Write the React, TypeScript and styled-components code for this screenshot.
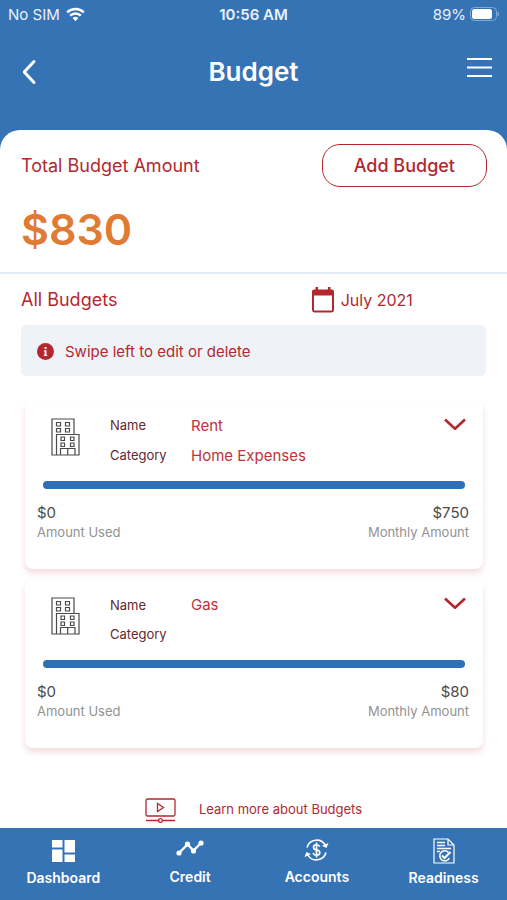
import React from "react";
import styled, { createGlobalStyle } from "styled-components";

const blue = "#3673b5";
const red = "#b3282f";

const GlobalStyle = createGlobalStyle`
  *, *::before, *::after { box-sizing: border-box; }
  body { margin: 0; background: ${blue}; font-family: "Inter", sans-serif; }
  h1, h2, p, dl, dd, ul { margin: 0; padding: 0; }
  button { font-family: inherit; cursor: pointer; }
  svg { display: block; flex: none; }
`;

const Page = styled.div`
  min-height: 100vh;
  display: flex;
  flex-direction: column;
`;

const StatusBar = styled.div`
  display: grid;
  grid-template-columns: 1fr auto 1fr;
  align-items: center;
  height: 28px;
  padding: 0 8px;
  color: #e9f1fa;
  font-size: 15px;
`;

const StatusGroup = styled.div<{ $end?: boolean }>`
  display: flex;
  align-items: center;
  gap: ${(p) => (p.$end ? 4 : 6)}px;
  justify-content: ${(p) => (p.$end ? "flex-end" : "flex-start")};
`;

const Clock = styled.time`
  font-weight: 600;
`;

const TitleBar = styled.header`
  display: grid;
  grid-template-columns: 1fr auto 1fr;
  align-items: center;
  height: 102px;
  padding: 0 15px 14px;
  color: #fff;
`;

const Title = styled.h1`
  font-size: 26px;
  line-height: 32px;
  font-weight: 600;
`;

const IconButton = styled.button<{ $end?: boolean }>`
  display: flex;
  padding: 0;
  border: 0;
  background: none;
  color: inherit;
  justify-self: ${(p) => (p.$end ? "end" : "start")};
`;

const Sheet = styled.main`
  flex: 1;
  display: flex;
  flex-direction: column;
  background: #fff;
  border-radius: 20px 20px 0 0;
`;

const Summary = styled.section`
  padding: 14px 20px 17px 21px;
  border-bottom: 2px solid #dfebf5;
`;

const SummaryTop = styled.div`
  display: flex;
  align-items: center;
  justify-content: space-between;
`;

const Heading = styled.h2`
  font-size: 18px;
  line-height: 24px;
  font-weight: 400;
  color: ${red};
`;

const AddButton = styled.button`
  height: 43px;
  padding: 0 31px;
  border: 1px solid ${red};
  border-radius: 18px;
  background: #fff;
  color: ${red};
  font-size: 18px;
  font-weight: 500;
`;

const Total = styled.p`
  margin-top: 16px;
  font-size: 43px;
  line-height: 52px;
  font-weight: 600;
  color: #df7b32;
`;

const Budgets = styled.section`
  flex: 1;
  display: flex;
  flex-direction: column;
  padding: 12px 21px 5px;
`;

const FilterRow = styled.div`
  display: grid;
  grid-template-columns: 5fr 3fr;
  align-items: center;
`;

const MonthButton = styled.button`
  display: flex;
  align-items: center;
  gap: 7px;
  padding: 0;
  border: 0;
  background: none;
  color: ${red};
  font-size: 16px;
  line-height: 28px;
`;

const Notice = styled.p`
  display: flex;
  align-items: center;
  gap: 11px;
  height: 51px;
  margin-top: 11px;
  padding: 2px 16px 0;
  border-radius: 5px;
  background: #eff3f8;
  color: ${red};
  font-size: 15px;
`;

const CardList = styled.ul`
  display: grid;
  gap: 11px;
  margin: 25px 3px 0 4px;
  list-style: none;
`;

const Card = styled.li`
  height: 168px;
  padding: 0 14px 0 12px;
  border-radius: 8px;
  background: #fff;
  box-shadow: 0 4px 6px rgba(190, 40, 60, 0.17);
`;

const CardTop = styled.div`
  display: grid;
  grid-template-columns: 73px 1fr 22px;
  align-items: start;
  height: 80px;
  padding-right: 3px;
`;

const CardIcon = styled.div`
  padding: 17px 0 0 14px;
`;

const Details = styled.dl<{ $compact: boolean }>`
  display: grid;
  grid-template-columns: 81px 1fr;
  grid-auto-rows: ${(p) => (p.$compact ? 29 : 30)}px;
  align-items: center;
  padding-top: ${(p) => (p.$compact ? 10 : 9)}px;
`;

const Term = styled.dt`
  font-size: 13px;
  color: #642832;
`;

const Value = styled.dd`
  font-size: 15px;
  color: #c0323b;
`;

const ExpandButton = styled(IconButton)`
  padding-top: 17px;
  color: ${red};
`;

const Bar = styled.div`
  height: 8px;
  margin: 0 4px 0 6px;
  border-radius: 4px;
  background: #2f6fb5;
`;

const Amounts = styled.div`
  display: flex;
  justify-content: space-between;
  padding-top: 14px;
`;

const Amount = styled.p<{ $end?: boolean }>`
  display: flex;
  flex-direction: column;
  text-align: ${(p) => (p.$end ? "right" : "left")};
`;

const Money = styled.strong`
  font-size: 15px;
  line-height: 20px;
  font-weight: 400;
  color: #4c4c4c;
`;

const Caption = styled.span`
  font-size: 13px;
  line-height: 18px;
  color: #929292;
`;

const LearnLink = styled.a`
  display: flex;
  align-items: flex-start;
  gap: 23px;
  align-self: center;
  margin-top: auto;
  color: ${red};
  font-size: 13px;
  line-height: 22px;
  text-decoration: none;
`;

const TabBar = styled.nav`
  display: grid;
  grid-template-columns: repeat(4, 1fr);
  height: 72px;
  padding-top: 8px;
  background: ${blue};
`;

const Tab = styled.a<{ $tall?: boolean }>`
  display: flex;
  flex-direction: column;
  align-items: center;
  gap: ${(p) => (p.$tall ? 2 : 3)}px;
  color: #fff;
  font-size: 14px;
  line-height: 20px;
  font-weight: 600;
  text-decoration: none;
`;

const TabIcon = styled.span<{ $tall?: boolean }>`
  display: flex;
  align-items: center;
  height: ${(p) => (p.$tall ? 30 : 28)}px;
`;

const Wifi = () => (
  <svg width="19" height="15" viewBox="0 0 19 15" fill="none" stroke="#fff" strokeWidth="2.5">
    <path d="M1.2 5.4a12 12 0 0 1 16.6 0" />
    <path d="M4.2 8.6a7.6 7.6 0 0 1 10.6 0" />
    <path d="M6.6 11.1a4.3 4.3 0 0 1 5.8 0L9.5 14.3z" fill="#fff" stroke="none" />
  </svg>
);

const Battery = () => (
  <svg width="29" height="14" viewBox="0 0 29 14">
    <rect x=".5" y=".5" width="26" height="13" rx="4" fill="none" stroke="#80a9d4" />
    <rect x="2" y="2" width="20" height="10" rx="2.5" fill="#fff" />
    <path d="M27.500 4.500c2 .7 2 4.300 0 5z" fill="#80a9d4" />
  </svg>
);

const Back = () => (
  <svg width="23" height="26" viewBox="-5 0 23 26" fill="none" stroke="currentColor" strokeWidth="3" strokeLinecap="round" strokeLinejoin="round">
    <path d="M14 2.500 4.200 13 14 23.500" />
  </svg>
);

const Menu = () => (
  <svg width="25" height="32" viewBox="0 0 25 32" stroke="currentColor" strokeWidth="2.200">
    <path d="M0 3h25M0 11.500h25M0 20h25" />
  </svg>
);

const Calendar = () => (
  <svg width="22" height="26" viewBox="0 0 22 26" fill={red}>
    <path
      fillRule="evenodd"
      d="M3.500 0h2.600v2.400h9.800V0h2.600v2.400H20a2 2 0 0 1 2 2V23a2.400 2.400 0 0 1-2.400 2.400H2.400A2.400 2.400 0 0 1 0 23V4.400a2 2 0 0 1 2-2h1.500zM2 8.500v14.900h18V8.500z"
    />
  </svg>
);

const Info = () => (
  <svg width="17" height="17" viewBox="0 0 17 17">
    <circle cx="8.500" cy="8.500" r="8.500" fill={red} />
    <path d="M7.500 4h2v2h-2zM6.900 7.200h2.600v4.500h.7V13H6.800v-1.300h.8V8.500h-.7z" fill="#eff3f8" />
  </svg>
);

const Building = () => (
  <svg width="29" height="38" viewBox="0 0 29 38" fill="none" stroke="#4a4a4a" strokeWidth="1.200">
    <path d="M5.500 37H1V1h22v15.500M5.500 37V16.500H28V37z" />
    <path d="M5.500 4.500h4v3.500h-4zM14.500 4.500h4v3.500h-4zM5.500 10.500h4V14h-4zM14.500 10.500h4V14h-4z" />
    <path d="M10 19h3.500v3.500H10zM19.500 19H23v3.500h-3.500zM10 25h3.500v3.500H10zM19.500 25H23v3.500h-3.500zM9.500 37v-6.500H24V37M16.700 30.500V37" />
  </svg>
);

const ChevronDown = () => (
  <svg width="22" height="13" viewBox="0 0 22 13" fill="none" stroke="currentColor" strokeWidth="2.600" strokeLinejoin="round">
    <path d="M1 1.500 11 10.800 21 1.500" />
  </svg>
);

const Video = () => (
  <svg width="31" height="25" viewBox="0 0 31 25" fill="none" stroke={red} strokeWidth="1.300">
    <rect x="1" y="1" width="29" height="17" rx="1.500" />
    <path d="M12.500 5.500v8l6-4zM1 22.500h12.500M17.500 22.500H30" />
    <circle cx="15.500" cy="22.500" r="1.900" />
  </svg>
);

const DashboardIcon = () => (
  <svg width="23" height="22" viewBox="0 0 23 22" fill="#fff">
    <path d="M0 0h10.500v7.500H0zM0 9.500h10.500V22H0zM12.500 0H23v12.500H12.500zM12.500 14.500H23V22H12.500z" />
  </svg>
);

const CreditIcon = () => (
  <svg width="28" height="20" viewBox="0 0 28 20">
    <path d="M3 13 11.500 4.500 17.500 10.500 25 3" fill="none" stroke="#fff" strokeWidth="2.300" />
    <g fill="#fff">
      <circle cx="3" cy="13" r="2.600" />
      <circle cx="11.500" cy="4" r="2.600" />
      <circle cx="17.500" cy="11" r="2.600" />
      <circle cx="25" cy="3" r="2.600" />
    </g>
  </svg>
);

const AccountsIcon = () => (
  <svg width="25" height="22" viewBox="0 0 25 22" fill="none" stroke="#fff" strokeWidth="1.600">
    <path d="M3 8.500A10 10 0 0 1 21.500 6.500M22 13.500A10 10 0 0 1 3.500 15.500" />
    <path d="M24.500 4 22.500 9 18 6.800zM.5 18 2.500 13 7 15.200z" fill="#fff" stroke="none" />
    <path d="M15.700 7.800c-.5-1.600-1.700-2-3.200-2-4 0-4 4.500 0 5.100 4.400.6 4.300 5.400 0 5.400-1.800 0-3-.8-3.400-2.400M12.500 3.500v15" />
  </svg>
);

const ReadinessIcon = () => (
  <svg width="22" height="26" viewBox="0 0 22 26" fill="none" stroke="#fff" strokeWidth="1.200">
    <path d="M1 1h14l6 6v18H1zM15 1v6h6" />
    <path d="M4 4.500h8M4 7.500h8M4 10.500h14M4 13.500h3" strokeWidth="1.400" />
    <path d="M15.500 14.500a5 5 0 1 0 .8 5.500" strokeWidth="1.500" />
    <path d="m9 17.500 2.500 2.500 6-6" strokeWidth="2" />
  </svg>
);

const budgets = [
  { name: "Rent", category: "Home Expenses", used: "$0", monthly: "$750" },
  { name: "Gas", category: "", used: "$0", monthly: "$80" },
];

const tabs = [
  { label: "Dashboard", icon: <DashboardIcon />, tall: true },
  { label: "Credit", icon: <CreditIcon />, tall: false },
  { label: "Accounts", icon: <AccountsIcon />, tall: false },
  { label: "Readiness", icon: <ReadinessIcon />, tall: true },
];

export default function App() {
  return (
    <Page>
      <GlobalStyle />
      <StatusBar>
        <StatusGroup>
          No SIM
          <Wifi />
        </StatusGroup>
        <Clock>10:56 AM</Clock>
        <StatusGroup $end>
          89%
          <Battery />
        </StatusGroup>
      </StatusBar>
      <TitleBar>
        <IconButton aria-label="Back">
          <Back />
        </IconButton>
        <Title>Budget</Title>
        <IconButton $end aria-label="Menu">
          <Menu />
        </IconButton>
      </TitleBar>
      <Sheet>
        <Summary>
          <SummaryTop>
            <Heading>Total Budget Amount</Heading>
            <AddButton>Add Budget</AddButton>
          </SummaryTop>
          <Total>$830</Total>
        </Summary>
        <Budgets>
          <FilterRow>
            <Heading>All Budgets</Heading>
            <MonthButton>
              <Calendar />
              July 2021
            </MonthButton>
          </FilterRow>
          <Notice>
            <Info />
            Swipe left to edit or delete
          </Notice>
          <CardList>
            {budgets.map((b) => (
              <Card key={b.name}>
                <CardTop>
                  <CardIcon>
                    <Building />
                  </CardIcon>
                  <Details $compact={!b.category}>
                    <Term>Name</Term>
                    <Value>{b.name}</Value>
                    <Term>Category</Term>
                    <Value>{b.category}</Value>
                  </Details>
                  <ExpandButton aria-label={`Expand ${b.name}`}>
                    <ChevronDown />
                  </ExpandButton>
                </CardTop>
                <Bar />
                <Amounts>
                  <Amount>
                    <Money>{b.used}</Money>
                    <Caption>Amount Used</Caption>
                  </Amount>
                  <Amount $end>
                    <Money>{b.monthly}</Money>
                    <Caption>Monthly Amount</Caption>
                  </Amount>
                </Amounts>
              </Card>
            ))}
          </CardList>
          <LearnLink href="#learn">
            <Video />
            Learn more about Budgets
          </LearnLink>
        </Budgets>
      </Sheet>
      <TabBar>
        {tabs.map((t) => (
          <Tab key={t.label} href={`#${t.label.toLowerCase()}`} $tall={t.tall}>
            <TabIcon $tall={t.tall}>{t.icon}</TabIcon>
            {t.label}
          </Tab>
        ))}
      </TabBar>
    </Page>
  );
}
